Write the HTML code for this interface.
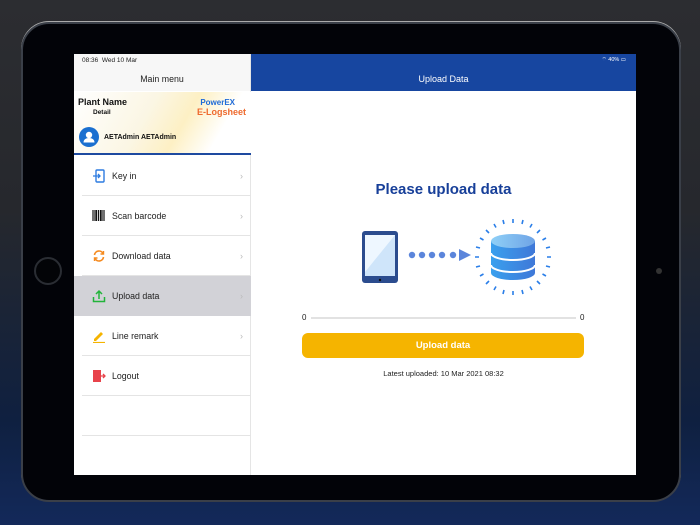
<!DOCTYPE html>
<html><head><meta charset="utf-8"><style>
*{margin:0;padding:0;box-sizing:border-box}
body{width:700px;height:525px;overflow:hidden;position:relative;font-family:"Liberation Sans",sans-serif;background:linear-gradient(180deg,#2c2d31 0%,#26282d 40%,#0f2040 80%,#13295a 100%)}
.tab{position:absolute;left:21px;top:22px;width:660px;height:480px;border-radius:28px;background:#020308;border:2px solid #3a3f48;box-shadow:0 -1px 0 #aaa}
.cam{position:absolute;left:34px;top:257px;width:28px;height:28px;border-radius:50%;border:2px solid #2a2d33;background:#030407}
.dot{position:absolute;left:656px;top:268px;width:6px;height:6px;border-radius:50%;background:#333}
.scr{position:absolute;left:74px;top:54px;width:562px;height:421px;background:#fff;overflow:hidden}
.side{position:absolute;left:0;top:0;width:177px;height:421px;background:#fff;border-right:1px solid #e5e5e5}
.stat{height:37px;background:#f7f7f7;font-size:6px;color:#222}
.hdr{position:absolute;left:177px;top:0;width:385px;height:37px;background:#1746a0;color:#fff;font-size:9px;text-align:center;line-height:50px}
.ban{position:absolute;top:38px;left:0;width:177px;height:63px;background:linear-gradient(120deg,#fff 0%,#fbf6e4 40%,#fdf0c4 60%,#fff 80%);border-bottom:2px solid #1e4aa0}
.row{position:absolute;left:0;width:177px;height:40px;font-size:8.8px;color:#222;line-height:40px}
.row .sep{position:absolute;left:8px;right:0;bottom:0;height:1px;background:#e4e4e4}
.row .t{position:absolute;left:38px}
.row .ch{position:absolute;right:8px;color:#bbb;font-size:9px}
.row .ic{position:absolute;left:18px;top:13px;width:14px;height:14px}
</style></head><body>
<div class="tab"></div><div class="cam"></div><div class="dot"></div>
<div class="scr">
 <div class="side">
  <div class="stat"><div style="padding:3px 0 0 8px;font-size:6.5px">08:36&nbsp; Wed 10 Mar</div><div style="text-align:center;font-size:8.8px;margin-top:10px">Main menu</div></div>
  <div class="ban">
   <div style="position:absolute;left:4px;top:5px;font-size:9px;font-weight:bold;color:#111">Plant Name</div>
   <div style="position:absolute;left:19px;top:17px;font-size:6.5px;font-weight:bold;color:#111">Detail</div>
   <div style="position:absolute;right:16px;top:6px;font-size:8px;font-weight:bold;color:#1e6ad8">PowerEX</div>
   <div style="position:absolute;right:5px;top:15px;font-size:9px;font-weight:bold;color:#ee6a2e">E-Logsheet</div>
   <div style="position:absolute;left:5px;top:35px;width:20px;height:20px;border-radius:50%;background:#1a6fd0"><svg width="20" height="20"><circle cx="10" cy="8" r="3.2" fill="#fff"/><path d="M4.5 15.5c0-3 2.5-4.5 5.5-4.5s5.5 1.5 5.5 4.5z" fill="#fff"/></svg></div>
   <div style="position:absolute;left:30px;top:42px;font-size:7px;font-weight:bold;color:#111">AETAdmin AETAdmin</div>
  </div>
  <div class="row" style="top:102px"><svg class="ic"><rect x="4" y="1" width="8" height="12" rx="1" fill="none" stroke="#2d7be0" stroke-width="1.4"/><path d="M1 7h7M6 5l2 2-2 2" stroke="#2d7be0" stroke-width="1.3" fill="none"/></svg><span class="t">Key in</span><span class="ch">›</span><div class="sep"></div></div>
  <div class="row" style="top:142px"><svg class="ic"><path d="M1 1v11M3 1v11M4.5 1v11M6.5 1v11M8.5 1v11M10 1v11M12 1v11" stroke="#111" stroke-width="1.2"/></svg><span class="t">Scan barcode</span><span class="ch">›</span><div class="sep"></div></div>
  <div class="row" style="top:182px"><svg class="ic"><path d="M2.5 6a4.5 4.5 0 0 1 8.5-1.5M11.5 8a4.5 4.5 0 0 1-8.5 1.5" stroke="#f58a1f" stroke-width="1.6" fill="none"/><path d="M11.5 2v3h-3M2.5 12V9h3" stroke="#f58a1f" stroke-width="1.4" fill="none"/></svg><span class="t">Download data</span><span class="ch">›</span><div class="sep"></div></div>
  <div class="row" style="top:222px;background:#d2d2d7"><svg class="ic"><path d="M1.5 8v4.5h11V8M7 10V2M4 5l3-3 3 3" stroke="#22b43a" stroke-width="1.5" fill="none"/></svg><span class="t">Upload data</span><span class="ch">›</span></div>
  <div class="row" style="top:262px"><svg class="ic"><path d="M2 10l7-7 2 2-7 7H2z" fill="#f5b400"/><path d="M1 13.5h12" stroke="#f5b400" stroke-width="1.2"/></svg><span class="t">Line remark</span><span class="ch">›</span><div class="sep"></div></div>
  <div class="row" style="top:302px"><svg class="ic"><rect x="1" y="1" width="8" height="12" fill="#e8434b"/><path d="M9 7h4M11 5l2 2-2 2" stroke="#e8434b" stroke-width="1.3" fill="none"/></svg><span class="t">Logout</span><div class="sep"></div></div>
  <div class="row" style="top:342px"><div class="sep"></div></div>
 </div>
 <div class="hdr"><div style="position:absolute;right:10px;top:0;font-size:5.5px;line-height:12px">⌔ 40% ▭</div>Upload Data</div>
 <div style="position:absolute;left:177px;top:127px;width:385px;text-align:center;font-size:15px;font-weight:bold;color:#173f99">Please upload data</div>
 <svg style="position:absolute;left:280px;top:160px" width="200" height="90">
  <defs><linearGradient id="g" x1="0" x2="1"><stop offset="0" stop-color="#3aa0ee"/><stop offset="1" stop-color="#3f78d8"/></linearGradient><linearGradient id="g2" x1="0" x2="1"><stop offset="0" stop-color="#8fd0f7"/><stop offset="1" stop-color="#6fa4e6"/></linearGradient></defs>
  <rect x="8" y="17" width="36" height="52" rx="3" fill="#2b4c8e"/><rect x="11" y="21" width="30" height="41" fill="#cfe5fa"/><path d="M11 21h30L11 58z" fill="#eef7ff"/><circle cx="26" cy="66" r="1.2" fill="#111"/>
  <g fill="#5b85db"><circle cx="58" cy="41" r="3.2"/><circle cx="68" cy="41" r="3.2"/><circle cx="78" cy="41" r="3.2"/><circle cx="88" cy="41" r="3.2"/><circle cx="99" cy="41" r="3.2"/><path d="M105 35v12l12-6z"/></g>
  <g transform="translate(159,43)">
   <g stroke="#2a7ee8" stroke-width="1.6">
    <path d="M0-38v4M0 38v-4M-38 0h4M38 0h-4M19-33l-2 3.5M-19 33l2-3.5M-19-33l2 3.5M19 33l-2-3.5M33-19l-3.5 2M-33 19l3.5-2M33 19l-3.5-2M-33-19l3.5 2M10-37l-1 4M-10 37l1-4M-10-37l1 4M10 37l-1-4M37-10l-4 1M-37 10l4-1M37 10l-4-1M-37-10l4 1M27-27l-3 3M-27 27l3-3M-27-27l3 3M27 27l-3-3"/>
   </g>
   <path d="M-22-16v32a22 7 0 0 0 44 0v-32z" fill="url(#g)"/>
   <ellipse cx="0" cy="-16" rx="22" ry="7" fill="url(#g2)"/>
   <path d="M-22-4a22 7 0 0 0 44 0M-22 8a22 7 0 0 0 44 0" stroke="#fff" stroke-width="2" fill="none"/>
  </g>
 </svg>
 <div style="position:absolute;left:228px;top:259px;font-size:8px;color:#222">0</div>
 <div style="position:absolute;left:237px;top:263px;width:265px;height:2px;background:#e2e2e2"></div>
 <div style="position:absolute;left:506px;top:259px;font-size:8px;color:#222">0</div>
 <div style="position:absolute;left:228px;top:279px;width:282px;height:25px;border-radius:6px;background:#f5b400;color:#fff;font-size:9.5px;font-weight:bold;text-align:center;line-height:25px">Upload data</div>
 <div style="position:absolute;left:177px;top:315px;width:385px;text-align:center;font-size:7.5px;color:#222">Latest uploaded: 10 Mar 2021 08:32</div>
</div>
</body></html>
